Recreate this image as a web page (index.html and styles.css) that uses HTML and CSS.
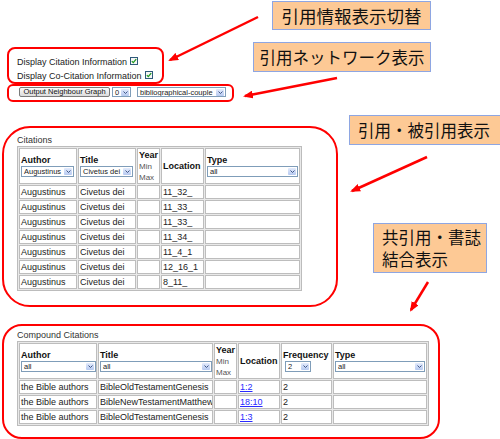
FILE: index.html
```html
<!DOCTYPE html>
<html lang="ja">
<head>
<meta charset="utf-8">
<title>Citations</title>
<link rel="stylesheet" href="styles.css">
</head>
<body>
<div class="page">
  <div class="box box1">
    <div class="line">Display Citation Information <span class="cb"><svg width="8" height="8" viewBox="0 0 8 8"><rect x="0.5" y="0.5" width="7" height="7" fill="#f6f6f6" stroke="#2f5a7a"/><path d="M1.8 4.1 L3.3 5.6 L6.2 2.2" fill="none" stroke="#1f9a1f" stroke-width="1.3"/></svg></span></div>
    <div class="line">Display Co-Citation Information <span class="cb"><svg width="8" height="8" viewBox="0 0 8 8"><rect x="0.5" y="0.5" width="7" height="7" fill="#f6f6f6" stroke="#2f5a7a"/><path d="M1.8 4.1 L3.3 5.6 L6.2 2.2" fill="none" stroke="#1f9a1f" stroke-width="1.3"/></svg></span></div>
  </div>
  <div class="box box2">
    <button class="btn">Output Neighbour Graph</button>
    <span class="sel s-num"><span class="val">0</span><span class="dd"><svg width="5" height="3" viewBox="0 0 5 3"><path d="M0.5 0.5 L2.5 2.5 L4.5 0.5" fill="none" stroke="#3f5687" stroke-width="1"/></svg></span></span>
    <span class="sel s-bib"><span class="val">bibliographical-couple</span><span class="dd"><svg width="5" height="3" viewBox="0 0 5 3"><path d="M0.5 0.5 L2.5 2.5 L4.5 0.5" fill="none" stroke="#3f5687" stroke-width="1"/></svg></span></span>
  </div>

  <div class="box box3">
    <div class="cap">Citations</div>
    <table class="grid cit">
      <tr class="hd">
        <th class="k1"><div class="lbl">Author</div><span class="sel s-c1"><span class="val">Augustinus</span><span class="dd"><svg width="5" height="3" viewBox="0 0 5 3"><path d="M0.5 0.5 L2.5 2.5 L4.5 0.5" fill="none" stroke="#3f5687" stroke-width="1"/></svg></span></span></th>
        <th class="k2"><div class="lbl">Title</div><span class="sel s-c1"><span class="val">Civetus dei</span><span class="dd"><svg width="5" height="3" viewBox="0 0 5 3"><path d="M0.5 0.5 L2.5 2.5 L4.5 0.5" fill="none" stroke="#3f5687" stroke-width="1"/></svg></span></span></th>
        <th class="k3"><div class="yr">Year</div><div class="mm">Min</div><div class="mm">Max</div></th>
        <th class="k4"><div class="lbl">Location</div></th>
        <th class="k5"><div class="lbl">Type</div><span class="sel s-type"><span class="val">all</span><span class="dd"><svg width="5" height="3" viewBox="0 0 5 3"><path d="M0.5 0.5 L2.5 2.5 L4.5 0.5" fill="none" stroke="#3f5687" stroke-width="1"/></svg></span></span></th>
      </tr>
      <tr><td>Augustinus</td><td>Civetus dei</td><td></td><td>11_32_</td><td></td></tr>
      <tr><td>Augustinus</td><td>Civetus dei</td><td></td><td>11_33_</td><td></td></tr>
      <tr><td>Augustinus</td><td>Civetus dei</td><td></td><td>11_33_</td><td></td></tr>
      <tr><td>Augustinus</td><td>Civetus dei</td><td></td><td>11_34_</td><td></td></tr>
      <tr><td>Augustinus</td><td>Civetus dei</td><td></td><td>11_4_1</td><td></td></tr>
      <tr><td>Augustinus</td><td>Civetus dei</td><td></td><td>12_16_1</td><td></td></tr>
      <tr><td>Augustinus</td><td>Civetus dei</td><td></td><td>8_11_</td><td></td></tr>
    </table>
  </div>

  <div class="box box4">
    <div class="cap">Compound Citations</div>
    <table class="grid comp">
      <tr class="hd">
        <th class="m1"><div class="lbl">Author</div><span class="sel s-m1"><span class="val">all</span><span class="dd"><svg width="5" height="3" viewBox="0 0 5 3"><path d="M0.5 0.5 L2.5 2.5 L4.5 0.5" fill="none" stroke="#3f5687" stroke-width="1"/></svg></span></span></th>
        <th class="m2"><div class="lbl">Title</div><span class="sel s-m2"><span class="val">all</span><span class="dd"><svg width="5" height="3" viewBox="0 0 5 3"><path d="M0.5 0.5 L2.5 2.5 L4.5 0.5" fill="none" stroke="#3f5687" stroke-width="1"/></svg></span></span></th>
        <th class="m3"><div class="yr">Year</div><div class="mm">Min</div><div class="mm">Max</div></th>
        <th class="m4"><div class="lbl">Location</div></th>
        <th class="m5"><div class="lbl">Frequency</div><span class="sel s-freq"><span class="val">2</span><span class="dd"><svg width="5" height="3" viewBox="0 0 5 3"><path d="M0.5 0.5 L2.5 2.5 L4.5 0.5" fill="none" stroke="#3f5687" stroke-width="1"/></svg></span></span></th>
        <th class="m6"><div class="lbl">Type</div><span class="sel s-type"><span class="val">all</span><span class="dd"><svg width="5" height="3" viewBox="0 0 5 3"><path d="M0.5 0.5 L2.5 2.5 L4.5 0.5" fill="none" stroke="#3f5687" stroke-width="1"/></svg></span></span></th>
      </tr>
      <tr><td>the Bible authors</td><td>BibleOldTestamentGenesis</td><td></td><td><a href="#">1:2</a></td><td>2</td><td></td></tr>
      <tr><td>the Bible authors</td><td>BibleNewTestamentMatthew</td><td></td><td><a href="#">18:10</a></td><td>2</td><td></td></tr>
      <tr><td>the Bible authors</td><td>BibleOldTestamentGenesis</td><td></td><td><a href="#">1:3</a></td><td>2</td><td></td></tr>
    </table>
  </div>
</div>

<div class="callout c1">引用情報表示切替</div>
<div class="callout c2">引用ネットワーク表示</div>
<div class="callout c3">引用・被引用表示</div>
<div class="callout c4"><span>共引用・書誌<br>結合表示</span></div>

<svg class="arrows" width="500" height="439" viewBox="0 0 500 439">
  <defs>
    <marker id="ah" viewBox="0 0 10 8" refX="8" refY="4" markerWidth="10" markerHeight="8" markerUnits="userSpaceOnUse" orient="auto">
      <path d="M0 0 L10 4 L0 8 Z" fill="#ff0000"/>
    </marker>
  </defs>
  <line x1="258" y1="17" x2="170" y2="60" stroke="#ff0000" stroke-width="2.5" marker-end="url(#ah)"/>
  <line x1="337" y1="78" x2="245" y2="96" stroke="#ff0000" stroke-width="2.5" marker-end="url(#ah)"/>
  <line x1="427" y1="157" x2="352" y2="191" stroke="#ff0000" stroke-width="2.5" marker-end="url(#ah)"/>
  <line x1="428" y1="282" x2="411" y2="310" stroke="#ff0000" stroke-width="2.5" marker-end="url(#ah)"/>
</svg>
</body>
</html>
```
FILE: styles.css
```css
html, body {
  margin: 0;
  padding: 0;
}
body {
  width: 500px;
  height: 439px;
  position: relative;
  overflow: hidden;
  background: #fff;
  font-family: "Liberation Sans", Arial, sans-serif;
  font-size: 9px;
  color: #222;
}
.page {
  padding-top: 47px;
}
.box {
  box-sizing: border-box;
  border: 2px solid #ff0000;
}
.box1 {
  margin-left: 7px;
  width: 157px;
  height: 37px;
  border-radius: 8px;
  padding: 6px 0 0 8px;
}
.line {
  line-height: 14px;
  height: 14px;
  white-space: nowrap;
  display: flex;
  align-items: center;
  gap: 3px;
}
.cb {
  display: inline-flex;
  width: 8px;
  height: 8px;
  margin-top: -3px;
}
.box2 {
  margin-left: 7px;
  width: 227px;
  height: 18px;
  border-radius: 6px;
  padding: 1px 0 0 10px;
  display: flex;
  align-items: flex-start;
  gap: 2px;
}
.btn {
  box-sizing: border-box;
  width: 91px;
  height: 10px;
  margin: 0;
  padding: 0 3px;
  border: 1px solid #7a7a7a;
  border-radius: 2px;
  background: linear-gradient(#fbfbfb, #dcdcdc);
  font-family: "Liberation Sans", Arial, sans-serif;
  font-size: 7.5px;
  line-height: 8px;
  color: #111;
  white-space: nowrap;
}
.sel {
  box-sizing: border-box;
  display: inline-flex;
  align-items: center;
  justify-content: space-between;
  height: 11px;
  border: 1px solid #7f9db9;
  background: #fff;
  padding-left: 2px;
  font-size: 7.5px;
  font-weight: normal;
  color: #222;
  white-space: nowrap;
  overflow: hidden;
}
.box2 .sel { height: 10px; }
.s-num { width: 19px; }
.s-bib { width: 89px; margin-left: 4px; }
.val {
  line-height: 9px;
}
.dd {
  flex: none;
  width: 8px;
  height: 7px;
  margin-right: 1px;
  background: linear-gradient(#e3ebfc, #b6c9f0);
  border-radius: 1px;
  display: flex;
  align-items: center;
  justify-content: center;
}
.dd svg { display: block; }

.box3 {
  margin-top: 24px;
  margin-left: 2px;
  width: 336px;
  height: 181px;
  border-radius: 28px;
  padding: 7px 0 0 13px;
}
.box4 {
  margin-top: 17px;
  margin-left: 2px;
  width: 438px;
  height: 115px;
  border-radius: 20px;
  padding: 4px 0 0 13px;
}
.cap {
  line-height: 11px;
  height: 11px;
  color: #333;
}

.grid {
  border-collapse: separate;
  border-spacing: 1px;
  border: 1px solid #bcbcbc;
  background: #e9e9e9;
  table-layout: fixed;
}
.grid th, .grid td {
  box-sizing: border-box;
  border: 1px solid #bdbdbd;
  background: #fff;
  padding: 0 0 0 1px;
  text-align: left;
  white-space: nowrap;
  overflow: hidden;
  line-height: 11px;
}
.grid th {
  vertical-align: middle;
  font-weight: normal;
}
.grid tr { height: 14px; }
.grid tr.hd { height: 36px; }
.lbl {
  font-weight: bold;
  line-height: 11px;
  color: #111;
}
.yr {
  font-weight: bold;
  line-height: 12px;
  color: #111;
}
.mm {
  line-height: 11px;
  font-size: 8px;
  color: #555;
}
.grid td { color: #222; }
.grid a { color: #2a2aff; text-decoration: underline; }

.cit { width: 283px; }
.cit .k1 { width: 58px; }
.cit .k2 { width: 58px; }
.cit .k3 { width: 23px; }
.cit .k4 { width: 43px; }
.cit .k5 { width: 95px; }
.s-c1 { width: 53px; }
.s-type { width: 91px; }

.comp { width: 410px; }
.comp .m1 { width: 78px; }
.comp .m2 { width: 115px; }
.comp .m3 { width: 23px; }
.comp .m4 { width: 42px; }
.comp .m5 { width: 51px; }
.comp .m6 { width: 94px; }
.s-m1 { width: 75px; }
.s-m2 { width: 112px; }
.s-freq { width: 26px; margin-left: 2px; }
.comp .s-type { width: 90px; }

.callout {
  position: absolute;
  box-sizing: border-box;
  background: #fdc995;
  border: 1.5px solid #8ea6e2;
  font-family: "Noto Sans CJK JP", sans-serif;
  color: #111;
  white-space: nowrap;
  display: flex;
  align-items: center;
  justify-content: center;
}
.c1 {
  left: 272px; top: 1px; width: 159px; height: 29px;
  font-size: 17.5px;
}
.c2 {
  left: 253px; top: 42px; width: 178px; height: 30px;
  font-size: 16.5px;
}
.c3 {
  left: 349px; top: 115px; width: 153px; height: 30px;
  font-size: 16.5px;
  justify-content: flex-start;
  padding-left: 8px;
}
.c4 {
  left: 373px; top: 223px; width: 114px; height: 50px;
  font-size: 16.5px;
  line-height: 22px;
  justify-content: flex-start;
  padding-left: 8px;
}
.arrows {
  position: absolute;
  left: 0;
  top: 0;
  pointer-events: none;
}
```
